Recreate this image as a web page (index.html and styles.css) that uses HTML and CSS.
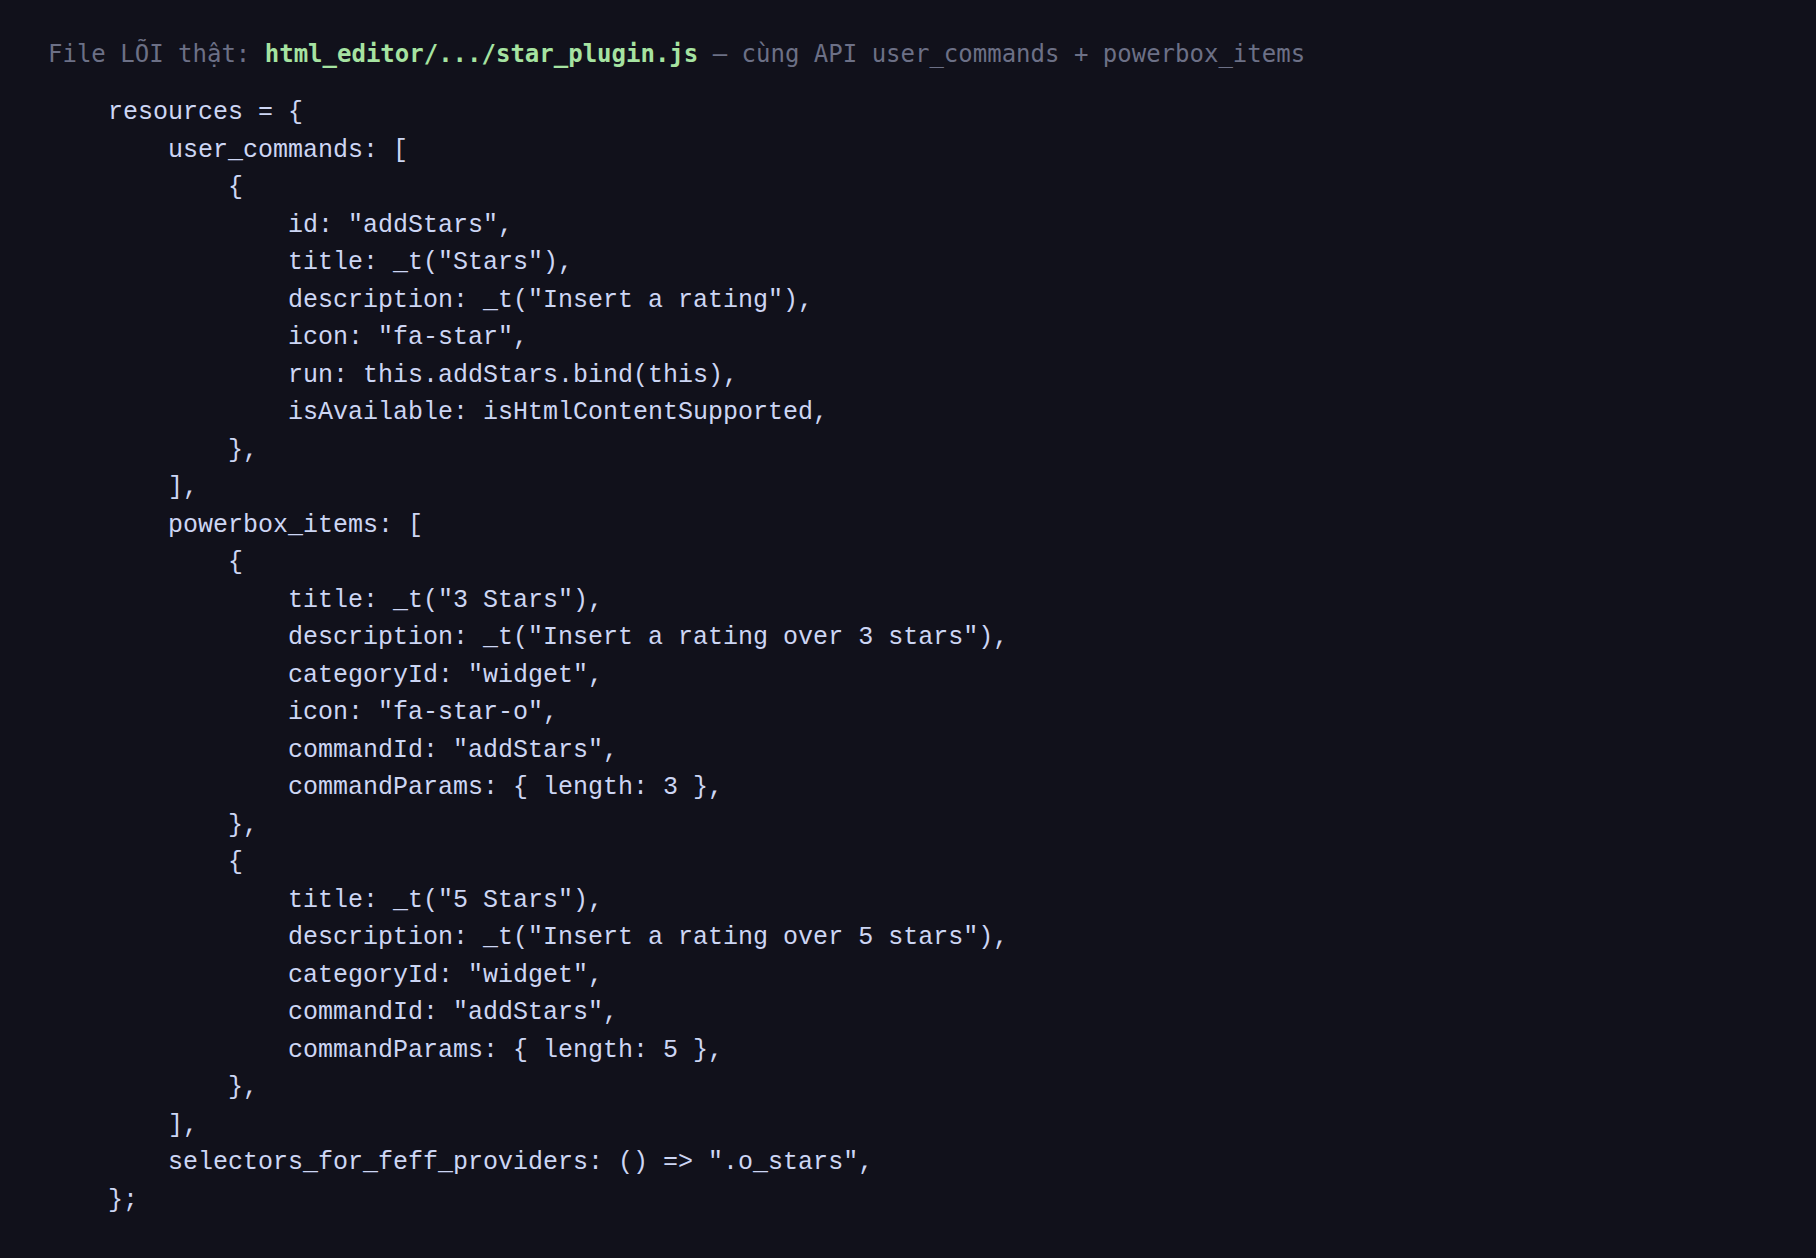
FILE: index.html
```html
<!DOCTYPE html>
<html lang="vi">
<head>
<meta charset="utf-8">
<title>star_plugin.js</title>
<link rel="stylesheet" href="styles.css">
</head>
<body>
<div class="page">
  <p class="caption">File LÕI thật: <b class="path">html_editor/.../star_plugin.js</b> — cùng API user_commands + powerbox_items</p>
  <pre class="code">    resources = {
        user_commands: [
            {
                id: "addStars",
                title: _t("Stars"),
                description: _t("Insert a rating"),
                icon: "fa-star",
                run: this.addStars.bind(this),
                isAvailable: isHtmlContentSupported,
            },
        ],
        powerbox_items: [
            {
                title: _t("3 Stars"),
                description: _t("Insert a rating over 3 stars"),
                categoryId: "widget",
                icon: "fa-star-o",
                commandId: "addStars",
                commandParams: { length: 3 },
            },
            {
                title: _t("5 Stars"),
                description: _t("Insert a rating over 5 stars"),
                categoryId: "widget",
                commandId: "addStars",
                commandParams: { length: 5 },
            },
        ],
        selectors_for_feff_providers: () =&gt; ".o_stars",
    };</pre>
</div>
</body>
</html>
```

FILE: styles.css
```css
html, body {
  margin: 0;
  padding: 0;
  background: #11111b;
  min-height: 100%;
}
.page {
  padding: 38px 48px 40px 48px;
  min-height: 1258px;
  box-sizing: border-box;
}
.caption {
  margin: 0;
  font-family: "DejaVu Sans Mono", monospace;
  font-size: 24px;
  line-height: 32px;
  color: #6c7086;
  white-space: pre;
}
.path {
  color: #a6e3a1;
  font-weight: bold;
}
.code {
  margin: 24px 0 0 0;
  font-family: "Liberation Mono", monospace;
  font-size: 25px;
  line-height: 37.5px;
  color: #cdd6f4;
}
```
